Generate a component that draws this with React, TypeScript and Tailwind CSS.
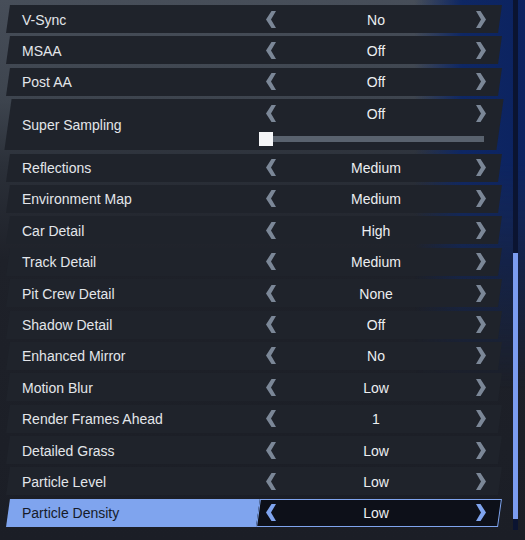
import React from "react";

type Row = { label: string; value: string; slider?: boolean; active?: boolean };

const rows: Row[] = [
  { label: "V-Sync", value: "No" },
  { label: "MSAA", value: "Off" },
  { label: "Post AA", value: "Off" },
  { label: "Super Sampling", value: "Off", slider: true },
  { label: "Reflections", value: "Medium" },
  { label: "Environment Map", value: "Medium" },
  { label: "Car Detail", value: "High" },
  { label: "Track Detail", value: "Medium" },
  { label: "Pit Crew Detail", value: "None" },
  { label: "Shadow Detail", value: "Off" },
  { label: "Enhanced Mirror", value: "No" },
  { label: "Motion Blur", value: "Low" },
  { label: "Render Frames Ahead", value: "1" },
  { label: "Detailed Grass", value: "Low" },
  { label: "Particle Level", value: "Low" },
  { label: "Particle Density", value: "Low", active: true },
];

function Chevron({ dir, color }: { dir: "l" | "r"; color: string }) {
  const pts = dir === "l" ? "10,0 5.5,0 0,8.5 5.5,17 10,17 5,8.5" : "0,0 4.5,0 10,8.5 4.5,17 0,17 5,8.5";
  return (
    <svg width="10" height="17" viewBox="0 0 10 17" className="shrink-0">
      <polygon points={pts} fill={color} />
    </svg>
  );
}

function SettingRow({ row }: { row: Row }) {
  const active = !!row.active;
  const chev = active ? "#7fa4ee" : "#7b8797";
  return (
    <div className={`relative flex ${row.slider ? "h-[51px]" : "h-[28px]"}`}>
      {!active && <div className="absolute inset-0 skew-x-[-8deg] bg-[#1f232b]" />}
      <div className="relative w-[250px] flex items-center pl-[14px] pt-[2px]">
        {active && <div className="absolute inset-0 skew-x-[-8deg] bg-[#7fa4ee]" />}
        <span className={`relative text-[14px] ${active ? "text-[#161b29]" : "text-[#e3e6ea]"}`}>{row.label}</span>
      </div>
      <div className="relative flex-1 flex flex-col">
        {active && <div className="absolute inset-0 skew-x-[-8deg] bg-[#0d1019] border border-[#7fa4ee]" />}
        <div className="relative h-[28px] flex items-center pl-[8px] pr-[14px]">
          <Chevron dir="l" color={chev} />
          <span className="flex-1 text-center text-[14px] text-[#eceef1] pt-[2px]">{row.value}</span>
          <Chevron dir="r" color={chev} />
        </div>
        {row.slider && (
          <div className="relative flex items-center mt-[5px] ml-[1px]">
            <div className="w-[14px] h-[14px] bg-[#f4f5f7]" />
            <div className="w-[211px] h-[6px] bg-[#59626e]" />
          </div>
        )}
      </div>
    </div>
  );
}

export default function App() {
  return (
    <div className="relative w-[525px] h-[540px] overflow-hidden bg-[#1b1e26] font-['Liberation_Sans',Arial,sans-serif]">
      <div className="absolute inset-0 bg-[linear-gradient(180deg,#474e59_0px,#3d444e_100px,#2b3039_165px,#1e2129_260px,#1b1e26_540px)]" />
      <div className="absolute inset-0 bg-[linear-gradient(90deg,transparent_79%,#0e2764_88%,#0c2360_100%)] [mask-image:linear-gradient(180deg,#000_0%,#000_30%,transparent_72%)]" />
      <div className="relative flex">
        <div className="ml-[8px] mt-[5px] w-[492px] flex flex-col gap-[3.4px]">
          {rows.map((r) => (
            <SettingRow key={r.label} row={r} />
          ))}
        </div>
        <div className="ml-[13px] w-[5px] h-[530px] bg-[#0b1431] flex flex-col">
          <div className="mt-[253px] h-[266px] bg-[#7b9cf0]" />
        </div>
      </div>
    </div>
  );
}
